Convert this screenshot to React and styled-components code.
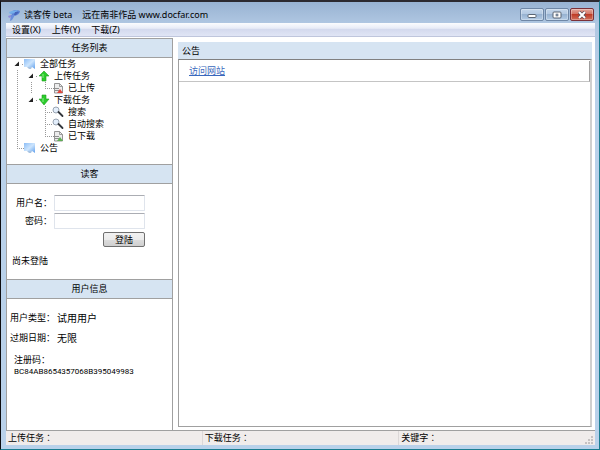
import React, { useState } from 'react';
import styled, { createGlobalStyle } from 'styled-components';

const TREE = [
    { id: 'all', label: '全部任务', icon: 'screen', guides: ['arrow'] },
    { id: 'up', label: '上传任务', icon: 'up', guides: ['line', 'arrow'] },
    { id: 'uploaded', label: '已上传', icon: 'fileRed', guides: ['line', 'line', 'end'] },
    { id: 'down', label: '下载任务', icon: 'down', guides: ['line', 'arrow'] },
    { id: 'search', label: '搜索', icon: 'search', guides: ['line', 'none', 'tee'] },
    { id: 'auto', label: '自动搜索', icon: 'search', guides: ['line', 'none', 'tee'] },
    { id: 'downloaded', label: '已下载', icon: 'fileGreen', guides: ['line', 'none', 'end'] },
    { id: 'notice', label: '公告', icon: 'screen', guides: ['end'] }
];

const MENUS = ['设置(X)', '上传(Y)', '下载(Z)'];

const LogoIcon = () => (
    <svg width="12" height="12" viewBox="0 0 12 12">
        <path d="M3 4 C4 1 8 0 12 2 C12 4 10 6 7 7 L4 6 Z" fill="#5d84d6" />
        <path d="M1 3 L4 2 L10 1 L7 4 L2 5 Z" fill="#74aeea" />
        <path d="M7 3 L11 3 L8 6 L6 6 Z" fill="#4663b8" />
        <path d="M3 6 L7 6 L4 11 L2 12 Z" fill="#6a8edb" />
        <path d="M0 7 L3 6 L3 8 L1 9 Z" fill="#8f8ad8" />
    </svg>
);

const ScreenIcon = () => (
    <svg width="12" height="12" viewBox="0 0 12 12">
        <defs>
            <linearGradient id="screen" x1="0" y1="0" x2="1" y2="1">
                <stop offset="0" stopColor="#8cbdf6" />
                <stop offset="0.5" stopColor="#cde5fd" />
                <stop offset="1" stopColor="#5f9fec" />
            </linearGradient>
        </defs>
        <path d="M0 1 L11 1 V11 L8 9 H0 Z" fill="url(#screen)" />
        <path d="M3 9 H8 L7 11 L5 11 Z" fill="#a9c4e2" />
    </svg>
);

const ArrowIcon = ({ down }) => (
    <svg width="12" height="12" viewBox="0 0 12 12">
        <path
            d={down ? 'M4 1 H8 V5 H11 L6 11 L1 5 H4 Z' : 'M6 1 L11 6 H8 V11 H4 V6 H1 Z'}
            fill="#2ccc2c"
            stroke="#1fa01f"
            strokeWidth="0.6"
        />
        <path d="M5 4 V8" stroke="#8cf08c" strokeWidth="1" />
    </svg>
);

const FileIcon = ({ color }) => (
    <svg width="12" height="12" viewBox="0 0 12 12">
        <path d="M2.500 1.500 H7.500 L10.500 4.500 V11 H2.500 Z" fill="#ececec" stroke="#8a8a8a" strokeWidth="0.9" />
        <path d="M7.500 1.500 V4.500 H10.500" fill="none" stroke="#8a8a8a" strokeWidth="0.8" />
        <path d="M1 6.500 H7 M3 8.500 H7" stroke="#8f8f8f" strokeWidth="1" />
        <path d="M8 7 L11 11 H5 Z" fill={color} />
    </svg>
);

const SearchIcon = () => (
    <svg width="12" height="12" viewBox="0 0 12 12">
        <circle cx="4" cy="4" r="3" fill="#e3eefb" stroke="#9aa5b3" strokeWidth="1" />
        <path d="M6.500 6 L10.500 10" stroke="#33373d" strokeWidth="1.800" strokeLinecap="round" />
    </svg>
);

const TreeIcon = ({ name }) => {
    if (name === 'screen') return <ScreenIcon />;
    if (name === 'up') return <ArrowIcon />;
    if (name === 'down') return <ArrowIcon down />;
    if (name === 'fileRed') return <FileIcon color="#e0483e" />;
    if (name === 'fileGreen') return <FileIcon color="#5fae55" />;
    return <SearchIcon />;
};

const Expander = () => (
    <svg width="6" height="6" viewBox="0 0 6 6">
        <path d="M5 0.500 V5 H0.500 Z" fill="#222" />
    </svg>
);

const App = () => {
    const [login, setLogin] = useState({ user: '', password: '' });

    const handleChange = (e) => {
        setLogin({ ...login, [e.target.name]: e.target.value });
    };

    const handleSubmit = (e) => {
        e.preventDefault();
    };

    return (
        <Window>
            <GlobalStyle />
            <TitleBar>
                <LogoIcon />
                <Title>
                    <span>读客传 beta</span>
                    <span>远在南非作品 www.docfar.com</span>
                </Title>
                <Controls>
                    <ControlButton aria-label="最小化">
                        <svg width="10" height="8" viewBox="0 0 10 8">
                            <rect x="1" y="3.500" width="8" height="3" rx="1" fill="#fff" stroke="#5b6573" />
                        </svg>
                    </ControlButton>
                    <ControlButton aria-label="最大化">
                        <svg width="10" height="8" viewBox="0 0 10 8">
                            <rect x="1" y="1" width="8" height="6" rx="1" fill="#fff" stroke="#5b6573" />
                            <rect x="4" y="3" width="2" height="2" fill="#8fa5c0" stroke="#5b6573" strokeWidth="0.6" />
                        </svg>
                    </ControlButton>
                    <ControlButton $close aria-label="关闭">
                        <svg width="10" height="8" viewBox="0 0 10 8">
                            <path d="M2 1 L8 7 M8 1 L2 7" stroke="#5a4a55" strokeWidth="3.400" />
                            <path d="M2 1 L8 7 M8 1 L2 7" stroke="#fff" strokeWidth="2" />
                        </svg>
                    </ControlButton>
                </Controls>
            </TitleBar>

            <Client>
                <MenuBar>
                    {MENUS.map((menu) => (
                        <MenuButton key={menu}>{menu}</MenuButton>
                    ))}
                </MenuBar>

                <Body>
                    <Sidebar>
                        <PanelTitle>任务列表</PanelTitle>
                        <Tree>
                            {TREE.map((node) => (
                                <TreeRow key={node.id}>
                                    {node.guides.map((guide, i) => (
                                        <Guide key={i} $type={guide}>
                                            {guide === 'arrow' && <Expander />}
                                        </Guide>
                                    ))}
                                    <TreeIcon name={node.icon} />
                                    <TreeLabel>{node.label}</TreeLabel>
                                </TreeRow>
                            ))}
                        </Tree>

                        <PanelTitle>读客</PanelTitle>
                        <LoginForm onSubmit={handleSubmit}>
                            <Field>
                                <FieldLabel htmlFor="user">用户名：</FieldLabel>
                                <Input id="user" name="user" value={login.user} onChange={handleChange} />
                            </Field>
                            <Field>
                                <FieldLabel htmlFor="password">密码：</FieldLabel>
                                <Input
                                    id="password"
                                    type="password"
                                    name="password"
                                    value={login.password}
                                    onChange={handleChange}
                                />
                            </Field>
                            <LoginButton type="submit">登陆</LoginButton>
                            <LoginState>尚未登陆</LoginState>
                        </LoginForm>

                        <PanelTitle>用户信息</PanelTitle>
                        <UserInfo>
                            <InfoRow>
                                <dt>用户类型：</dt>
                                <InfoValue>试用用户</InfoValue>
                            </InfoRow>
                            <InfoRow>
                                <dt>过期日期：</dt>
                                <InfoValue>无限</InfoValue>
                            </InfoRow>
                            <CodeBlock>
                                <dt>注册码：</dt>
                                <Code>BC84AB8654357068B395049983</Code>
                            </CodeBlock>
                        </UserInfo>
                    </Sidebar>

                    <Main>
                        <NoticeTitle>公告</NoticeTitle>
                        <NoticeList>
                            <NoticeItem>
                                <a href="#site">访问网站</a>
                            </NoticeItem>
                        </NoticeList>
                    </Main>
                </Body>

                <StatusBar>
                    <StatusCell>上传任务：</StatusCell>
                    <StatusCell>下载任务：</StatusCell>
                    <StatusCell>
                        关键字：
                        <svg width="8" height="8" viewBox="0 0 8 8">
                            <path
                                d="M6 0h2v2h-2z M3 3h2v2h-2z M6 3h2v2h-2z M0 6h2v2h-2z M3 6h2v2h-2z M6 6h2v2h-2z"
                                fill="#c6c2c2"
                            />
                        </svg>
                    </StatusCell>
                </StatusBar>
            </Client>
        </Window>
    );
};

const GlobalStyle = createGlobalStyle`
    * {
        box-sizing: border-box;
    }

    body {
        margin: 0;
        font-family: "Noto Sans", "Noto Sans CJK SC", sans-serif;
        font-size: 9px;
        line-height: 12px;
        color: #000;
    }

    button, input {
        font: inherit;
        color: inherit;
    }

    dl, dd, ul {
        margin: 0;
        padding: 0;
    }

    svg {
        display: block;
        flex-shrink: 0;
    }
`;

const Window = styled.div`
    display: flex;
    flex-direction: column;
    min-height: 100vh;
    padding: 0 4px 4px 5px;
    border: 1px solid #1b7d91;
    border-top: 2px solid #2c2a30;
    border-left-color: #0c0c10;
    background: linear-gradient(#98b3d2, #b0c7e2 22px, #b9d1ea 90px);
`;

const TitleBar = styled.header`
    display: flex;
    align-items: center;
    height: 21px;
    padding: 4px 1px 0 2px;
`;

const Title = styled.h1`
    display: flex;
    flex: 1;
    gap: 10px;
    margin: 0 0 0 4px;
    font-size: 9px;
    font-weight: 400;
`;

const Controls = styled.div`
    display: flex;
    gap: 1px;
`;

const ControlButton = styled.button`
    display: flex;
    align-items: center;
    justify-content: center;
    width: 24px;
    height: 13px;
    padding: 0;
    border: 1px solid ${(props) => (props.$close ? '#7c3038' : '#6f87a6')};
    border-radius: 2px;
    background: ${(props) =>
        props.$close
            ? 'linear-gradient(#e3a69b, #d2705f 50%, #bf3c27 50%, #d0705c)'
            : 'linear-gradient(#c3d5ea, #b2c8e1 50%, #97b2d1 50%, #b4cbe5)'};
    box-shadow: inset 0 0 0 1px rgba(255, 255, 255, 0.3);
`;

const Client = styled.div`
    display: flex;
    flex: 1;
    flex-direction: column;
    background: #fff;
`;

const MenuBar = styled.nav`
    display: flex;
    gap: 11px;
    height: 14px;
    padding: 0 6px;
    border-bottom: 1px solid #bfc6dc;
    background: linear-gradient(#fbfcfe, #e8ecf7 40%, #d4daee 50%, #e0e5f5);
`;

const MenuButton = styled.button`
    padding: 0;
    border: none;
    background: none;
`;

const Body = styled.div`
    display: flex;
    flex: 1;
    gap: 5px;
    padding-top: 1px;
`;

const Sidebar = styled.aside`
    flex: 0 0 167px;
    border: 1px solid #a0a0a0;
    border-width: 0 1px;
`;

const PanelTitle = styled.h2`
    height: 20px;
    margin: 0;
    border: 1px solid #a0a0a0;
    border-width: 1px 0;
    background: #d6e4f2;
    font-size: 9px;
    font-weight: 400;
    line-height: 18px;
    text-align: center;
`;

const Tree = styled.ul`
    height: 106px;
    padding: 0 3px;
    list-style: none;
`;

const TreeRow = styled.li`
    display: flex;
    height: 12px;
`;

const TreeLabel = styled.span`
    margin-left: 4px;
`;

const dots = 'repeating-linear-gradient(#999 0 1px, transparent 1px 2px)';
const dash = 'repeating-linear-gradient(90deg, #999 0 1px, transparent 1px 2px)';

const guides = {
    none: 'none',
    line: `${dots} 7px 0 / 1px 12px no-repeat`,
    tee: `${dots} 7px 0 / 1px 12px no-repeat, ${dash} 7px 6px / 8px 1px no-repeat`,
    end: `${dots} 7px 0 / 1px 6px no-repeat, ${dash} 7px 6px / 8px 1px no-repeat`,
    arrow: `${dash} 12px 6px / 2px 1px no-repeat`
};

const Guide = styled.span`
    display: flex;
    align-items: center;
    width: 14px;
    padding-left: 4px;
    background: ${(props) => guides[props.$type]};
`;

const LoginForm = styled.form`
    display: flex;
    flex-direction: column;
    gap: 2px;
    height: 95px;
    padding: 11px 27px 0 5px;
`;

const Field = styled.div`
    display: flex;
    align-items: center;
    justify-content: flex-end;
`;

const FieldLabel = styled.label`
    margin-right: 2px;
`;

const Input = styled.input`
    width: 91px;
    height: 16px;
    padding: 0 2px;
    border: 1px solid #dfe4ec;
    border-top-color: #abadb3;
    border-radius: 1px;
    background: #fff;
`;

const LoginButton = styled.button`
    align-self: flex-end;
    width: 42px;
    height: 15px;
    margin-top: 1px;
    padding: 0;
    border: 1px solid #707070;
    border-radius: 2px;
    background: linear-gradient(#f2f2f2, #ebebeb 50%, #ddd 50%, #cfcfcf);
    line-height: 12px;
`;

const LoginState = styled.span`
    margin-top: 6px;
`;

const UserInfo = styled.dl`
    display: flex;
    flex-direction: column;
    gap: 8px;
    padding: 13px 3px;
`;

const InfoRow = styled.div`
    display: flex;
    align-items: center;
    gap: 2px;
`;

const InfoValue = styled.dd`
    font-size: 10px;
`;

const CodeBlock = styled.div`
    margin-top: 2px;
    padding-left: 4px;
`;

const Code = styled.dd`
    font-family: Roboto, sans-serif;
    font-size: 8px;
`;

const Main = styled.main`
    display: flex;
    flex: 1;
    flex-direction: column;
    min-width: 0;
    padding: 4px 3px 3px 0;
`;

const NoticeTitle = styled.h2`
    margin: 0;
    padding: 0 4px;
    background: #d6e4f2;
    font-size: 9px;
    font-weight: 400;
    line-height: 17px;
`;

const NoticeList = styled.ul`
    flex: 1;
    border: 1px solid #a0a0a0;
    border-right: 2px solid #cfcfcf;
    border-top-color: #808080;
    list-style: none;
`;

const NoticeItem = styled.li`
    margin-top: 1px;
    padding: 4px 10px;
    border: 1px solid #a0a0a0;
    border-width: 0 1px 1px 0;
    border-bottom-color: #c4c4c4;

    a {
        color: #3a68bd;
    }
`;

const StatusBar = styled.footer`
    display: flex;
    border-top: 1px solid #a0a0a0;
    background: #f0eceb;
`;

const StatusCell = styled.span`
    display: flex;
    flex: 1;
    align-items: flex-end;
    justify-content: space-between;
    padding: 1px 2px;
    border-left: 1px solid #dcd8d8;
    font-family: "Noto Sans", "Noto Sans CJK TC", sans-serif;

    &:first-child {
        border-left: none;
    }
`;

export default App;
